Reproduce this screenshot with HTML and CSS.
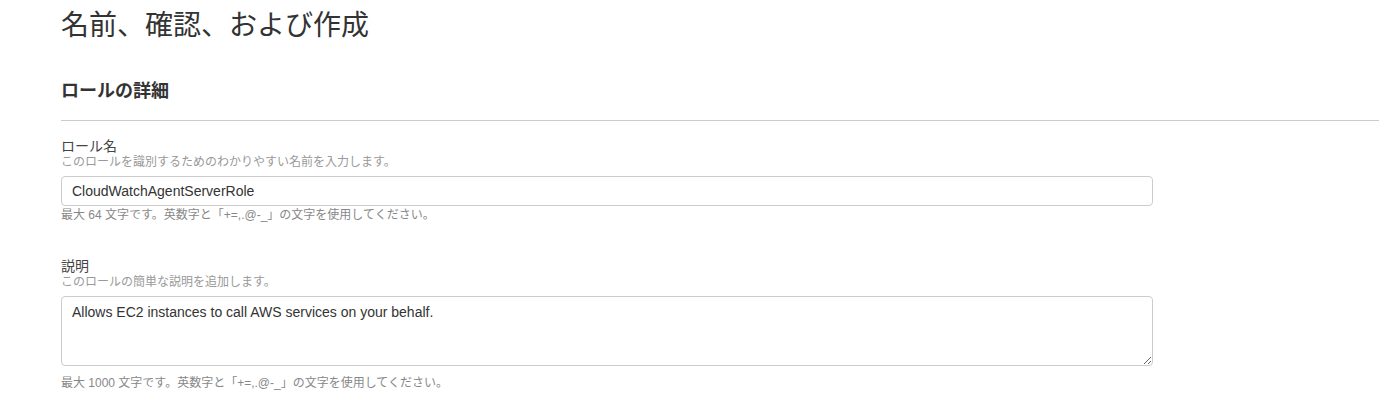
FILE: index.html
```html
<!DOCTYPE html>
<html lang="ja">
<head>
<meta charset="utf-8">
<title>名前、確認、および作成</title>
<link rel="stylesheet" href="styles.css">
</head>
<body>
<main class="page">
  <h1 class="page-title">名前、確認、および作成</h1>
  <h2 class="section-title">ロールの詳細</h2>
  <hr class="divider">
  <div class="field field-name">
    <label class="field-label" for="role-name">ロール名</label>
    <div class="field-hint">このロールを識別するためのわかりやすい名前を入力します。</div>
    <input class="text-input" id="role-name" type="text" value="CloudWatchAgentServerRole">
    <div class="field-help">最大 64 文字です。英数字と「+=,.@-_」の文字を使用してください。</div>
  </div>
  <div class="field field-desc">
    <label class="field-label" for="role-desc">説明</label>
    <div class="field-hint">このロールの簡単な説明を追加します。</div>
    <textarea class="text-area" id="role-desc">Allows EC2 instances to call AWS services on your behalf.</textarea>
    <div class="field-help field-help-area">最大 1000 文字です。英数字と「+=,.@-_」の文字を使用してください。</div>
  </div>
</main>
</body>
</html>
```
FILE: styles.css
```css
html, body {
  margin: 0;
  padding: 0;
  background: #ffffff;
}
body {
  font-family: "Liberation Sans", "Noto Sans CJK JP", sans-serif;
  color: #333333;
}
.page {
  padding: 9px 0 0 61px;
}
.page-title {
  margin: 0;
  font-size: 28px;
  line-height: 34px;
  font-weight: normal;
  color: #333333;
}
.section-title {
  margin: 36px 0 0 0;
  font-size: 18px;
  line-height: 24px;
  font-weight: bold;
  color: #333333;
}
.divider {
  margin: 17px 0 0 0;
  border: 0;
  border-top: 1px solid #cccccc;
  height: 0;
}
.field {
  width: 1092px;
}
.field-name {
  margin-top: 17px;
}
.field-desc {
  margin-top: 35px;
}
.field-label {
  display: block;
  font-size: 14px;
  line-height: 16px;
  color: #444444;
}
.field-hint {
  font-size: 12px;
  line-height: 16px;
  color: #999999;
}
.text-input,
.text-area {
  display: block;
  box-sizing: border-box;
  width: 1092px;
  margin: 6px 0 0 0;
  border: 1px solid #cccccc;
  border-radius: 4px;
  background: #ffffff;
  font-family: "Liberation Sans", "Noto Sans CJK JP", sans-serif;
  font-size: 14px;
  color: #333333;
  outline: none;
}
.text-input {
  height: 30px;
  padding: 0 10px;
}
.text-area {
  height: 70px;
  padding: 6px 10px;
  line-height: 18px;
  resize: vertical;
}
.field-help {
  margin-top: 1px;
  font-size: 12px;
  line-height: 16px;
  color: #888888;
}
.field-help-area {
  margin-top: 9px;
}
```
